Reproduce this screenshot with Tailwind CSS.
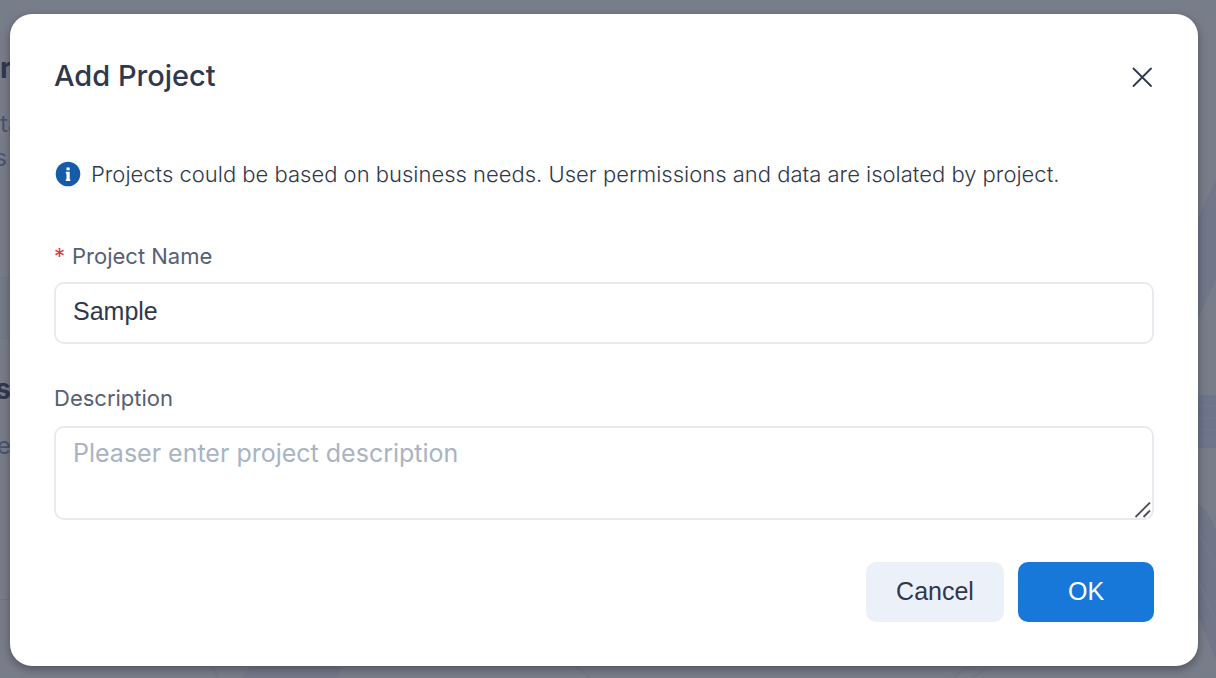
<!DOCTYPE html>
<html lang="en">
<head>
<meta charset="utf-8">
<meta name="viewport" content="width=device-width, initial-scale=1">
<title>Add Project</title>
<script src="https://cdn.jsdelivr.net/npm/@tailwindcss/browser@4"></script>
</head>
<body class="relative min-h-screen overflow-hidden bg-[#787d8a] font-['Inter','Liberation_Sans',sans-serif] text-[#2f384c]">
  <!-- Dimmed page behind the dialog -->
  <div class="absolute inset-0 overflow-hidden" aria-hidden="true">
    <div class="absolute left-0 top-[277px] h-[62px] w-1/2 border-y border-[#727889] bg-[#757a88]"></div>
    <div class="absolute left-0 top-[599px] h-px w-1/2 bg-[#6e7587]"></div>
    <span class="absolute top-[48px] left-0 text-[28px] leading-10 font-bold text-[#32394f]">r</span>
    <span class="absolute top-[108px] left-0 text-[24px] leading-8 text-[#4b556c]">ta</span>
    <span class="absolute top-[142px] right-full -mr-[7px] text-[24px] leading-8 text-[#4b556c]">s</span>
    <span class="absolute top-[369px] right-full -mr-[11px] text-[28px] leading-10 font-bold text-[#32394f]">s</span>
    <span class="absolute top-[430px] right-full -mr-[11px] text-[24px] leading-8 text-[#4b556c]">e</span>
    <svg class="absolute top-0 right-0 h-[678px] w-[1216px]" viewBox="0 0 1216 678" fill="none">
      <path d="M1216 180L1198 218V318L1216 280Z" fill="#717689"/>
      <path d="M1198 395H1216V448H1198Z" fill="#6d758b"/>
      <path d="M1198 406H1216M1198 418H1216M1198 430H1216M1198 440H1216" stroke="#70778c" stroke-width="2"/>
      <path d="M1198 504Q1210 512 1216 530V660L1198 615Z" fill="#707588"/>
      <path d="M1200 535L1216 565M1198 580L1216 622" stroke="#747989" stroke-width="2"/>
      <path d="M250 666H342L336 678H242Z" fill="#737889"/>
      <path d="M212 666L218 678M576 666L590 678M970 666L952 678M990 666L972 678" stroke="#73798a" stroke-width="2"/>
    </svg>
  </div>

  <div class="relative pt-3.5 pr-[18px] pb-3 pl-2.5">
    <section role="dialog" aria-modal="true" aria-labelledby="dialog-title" class="rounded-[22px] bg-white px-11 pt-11 pb-11 shadow-[0_3px_10px_rgba(0,0,0,0.35)]">
      <header class="flex h-9 items-center justify-between">
        <h1 id="dialog-title" class="text-[29px] leading-9 font-medium">Add Project</h1>
        <button type="button" aria-label="Close" class="flex size-6 items-center justify-center">
          <svg class="size-6" viewBox="0 0 24 24" fill="none" stroke="#2f384c" stroke-width="1.8" stroke-linecap="round"><path d="M3.5 4.5L21 22M21 4.5L3.5 22"/></svg>
        </button>
      </header>

      <p class="mt-16 flex h-8 items-center gap-2.5 text-[22px] leading-8 font-light">
        <svg class="ml-px size-[26px] shrink-0" viewBox="0 0 26 26" aria-hidden="true"><circle cx="13" cy="13" r="12.3" fill="#155ca8"/><path d="M11.5 6.5H14.7V9.3H11.5ZM10.8 10.8H14.7V18.2H15.3V20H10.8V18.2H11.5V12.4H10.8Z" fill="#fff"/></svg>
        <span>Projects could be based on business needs. User permissions and data are isolated by project.</span>
      </p>

      <form class="flex flex-col">
        <label for="project-name" class="mt-[50px] flex gap-[7px] text-[22px] leading-8 text-[#566073]"><span class="text-[#d93b42]">*</span>Project Name</label>
        <input id="project-name" type="text" value="Sample" class="mt-2.5 h-[62px] rounded-[10px] border-2 border-[#e7ebf1] bg-white px-[17px] pb-1 font-['Liberation_Sans',sans-serif] text-[25px] outline-none">
        <label for="description" class="mt-[38px] text-[22px] leading-8 text-[#566073]">Description</label>
        <div class="relative mt-3 flex">
          <textarea id="description" placeholder="Pleaser enter project description" class="h-[94px] w-full resize-none rounded-[10px] border-2 border-[#e7ebf1] bg-white px-[17px] py-[9px] text-[25px] leading-8 outline-none placeholder:text-[#a9b3c4]"></textarea>
          <svg class="pointer-events-none absolute right-[3px] bottom-[2px] size-4" viewBox="0 0 16 16" fill="none" stroke="#4d4d4d" stroke-width="1.8" aria-hidden="true"><path d="M0.5 15L15 0.5M8.5 15L15 8.5"/></svg>
        </div>
        <div class="mt-[42px] flex justify-end gap-3.5 font-['Liberation_Sans',sans-serif] text-[25px]">
          <button type="button" class="h-[60px] w-[138px] rounded-[10px] bg-[#ebf0f9]">Cancel</button>
          <button type="submit" class="h-[60px] w-[136px] rounded-[10px] bg-[#1878d9] text-white">OK</button>
        </div>
      </form>
    </section>
  </div>
</body>
</html>
